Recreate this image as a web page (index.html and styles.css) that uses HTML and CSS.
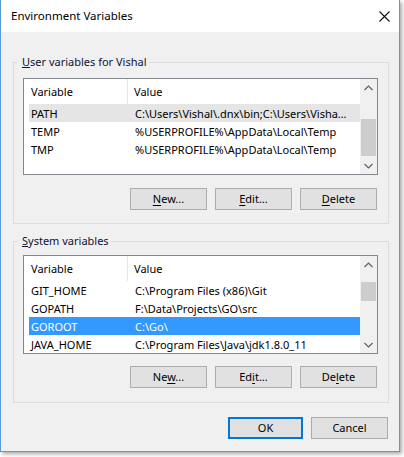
FILE: index.html
```html
<!DOCTYPE html>
<html>
<head>
<meta charset="utf-8">
<link rel="stylesheet" href="styles.css">
</head>
<body>
<div class="window">
  <div class="titlebar">
    <span class="title">Environment Variables</span>
    <svg class="close" width="11" height="11" viewBox="0 0 11 11"><path d="M0.5 0.5 L10.5 10.5 M10.5 0.5 L0.5 10.5" stroke="#111" stroke-width="1.1" fill="none"/></svg>
  </div>
  <div class="body">
    <fieldset class="group group-user">
      <legend><u>U</u>ser variables for Vishal</legend>
      <div class="listview lv-user">
        <div class="lv-main">
          <div class="lv-header"><div class="c1">Variable</div><div class="c2">Value</div></div>
          <div class="row hot"><div class="c1">PATH</div><div class="c2">C:\Users\Vishal\.dnx\bin;C:\Users\Visha…</div></div>
          <div class="row"><div class="c1">TEMP</div><div class="c2">%USERPROFILE%\AppData\Local\Temp</div></div>
          <div class="row"><div class="c1">TMP</div><div class="c2">%USERPROFILE%\AppData\Local\Temp</div></div>
        </div>
        <div class="scrollbar">
          <div class="arrow"><svg width="9" height="6" viewBox="0 0 9 6"><path d="M0.5 5 L4.5 1 L8.5 5" stroke="#606060" stroke-width="1.2" fill="none"/></svg></div>
          <div class="track"><div class="thumb" style="margin-top:23px;height:37px"></div></div>
          <div class="arrow"><svg width="9" height="6" viewBox="0 0 9 6"><path d="M0.5 1 L4.5 5 L8.5 1" stroke="#606060" stroke-width="1.2" fill="none"/></svg></div>
        </div>
      </div>
      <div class="btnrow">
        <button class="btn"><u>N</u>ew...</button>
        <button class="btn"><u>E</u>dit...</button>
        <button class="btn"><u>D</u>elete</button>
      </div>
    </fieldset>
    <fieldset class="group group-sys">
      <legend><u>S</u>ystem variables</legend>
      <div class="listview lv-sys">
        <div class="lv-main">
          <div class="lv-header"><div class="c1">Variable</div><div class="c2">Value</div></div>
          <div class="row"><div class="c1">GIT_HOME</div><div class="c2">C:\Program Files (x86)\Git</div></div>
          <div class="row"><div class="c1">GOPATH</div><div class="c2">F:\Data\Projects\GO\src</div></div>
          <div class="row selected"><div class="c1">GOROOT</div><div class="c2">C:\Go\</div></div>
          <div class="row"><div class="c1">JAVA_HOME</div><div class="c2">C:\Program Files\Java\jdk1.8.0_11</div></div>
        </div>
        <div class="scrollbar">
          <div class="arrow"><svg width="9" height="6" viewBox="0 0 9 6"><path d="M0.5 5 L4.5 1 L8.5 5" stroke="#606060" stroke-width="1.2" fill="none"/></svg></div>
          <div class="track"><div class="thumb" style="margin-top:9px;height:19px"></div></div>
          <div class="arrow"><svg width="9" height="6" viewBox="0 0 9 6"><path d="M0.5 1 L4.5 5 L8.5 1" stroke="#606060" stroke-width="1.2" fill="none"/></svg></div>
        </div>
      </div>
      <div class="btnrow btnrow-sys">
        <button class="btn">Ne<u>w</u>...</button>
        <button class="btn">Ed<u>i</u>t...</button>
        <button class="btn">De<u>l</u>ete</button>
      </div>
    </fieldset>
    <div class="dialog-buttons">
      <button class="btn btn-default">OK</button>
      <button class="btn btn-cancel">Cancel</button>
    </div>
  </div>
</div>
</body>
</html>
```
FILE: styles.css
```css
* { box-sizing: border-box; }
html, body { margin: 0; padding: 0; background: #ffffff; }
body {
  font-family: "Noto Sans", "Open Sans", sans-serif;
  font-size: 11px;
  color: #000;
  width: 404px;
  height: 457px;
  overflow: hidden;
}
.window {
  width: 400px;
  height: 452px;
  background: #f0f0f0;
  border: 1px solid #5b9bd5;
  border-top: none;
  box-shadow: 2px 2px 4px rgba(0,0,0,0.35);
  display: flex;
  flex-direction: column;
}
.titlebar {
  height: 32px;
  background: #fff;
  display: flex;
  align-items: center;
  justify-content: space-between;
  padding: 0 9px 0 10px;
  flex: none;
}
.title { font-size: 11.5px; color: #000; padding-bottom: 1px; }
.body {
  flex: 1;
  display: flex;
  flex-direction: column;
  padding: 22px 10px 0 12px;
}
.group {
  margin: 0;
  width: 376px;
  border: 1px solid #dcdcdc;
  padding: 8px 10px 13px 9px;
  min-width: 0;
}
.group legend {
  padding: 0 2px 0 5px;
  margin-left: -6px;
  line-height: 16px;
  height: 16px;
  color: #101030;
}
.group-sys {
  margin-top: 9px;
  padding-top: 6px;
  padding-bottom: 14px;
}
.listview {
  display: flex;
  border: 1px solid #828790;
  background: #fff;
  width: 355px;
}
.lv-user { height: 97px; }
.lv-sys { height: 99px; }
.lv-main {
  flex: 1;
  display: flex;
  flex-direction: column;
  min-width: 0;
}
.lv-header {
  height: 25px;
  display: flex;
  align-items: center;
  flex: none;
}
.lv-header .c1 {
  width: 104px;
  padding-left: 7px;
  height: 100%;
  display: flex;
  align-items: center;
  border-right: 1px solid #e5e5e5;
}
.lv-header .c2 { padding-left: 6px; }
.row {
  height: 18px;
  display: flex;
  align-items: center;
  margin-left: 5px;
  flex: none;
  white-space: nowrap;
}
.row .c1 { width: 99px; padding-left: 2px; }
.row .c2 { padding-left: 7px; overflow: hidden; }
.row.hot { background: #e5e5e5; }
.row.selected { background: #3399ff; color: #fff; }
.scrollbar {
  width: 17px;
  flex: none;
  background: #f0f0f0;
  display: flex;
  flex-direction: column;
}
.arrow {
  height: 17px;
  display: flex;
  align-items: center;
  justify-content: center;
  flex: none;
}
.track { flex: 1; display: flex; flex-direction: column; }
.thumb { background: #cdcdcd; margin-left: 1px; margin-right: 1px; }
.btnrow {
  display: flex;
  justify-content: flex-end;
  gap: 8px;
  margin-top: 13px;
  padding-right: 1px;
}
.btnrow-sys { margin-top: 12px; }
.btn {
  width: 77px;
  height: 22px;
  background: #e1e1e1;
  border: 1px solid #adadad;
  font-family: "Noto Sans", "Open Sans", sans-serif;
  font-size: 11px;
  color: #000;
  padding: 0 0 1px 0;
  margin: 0;
  border-radius: 0;
}
.btn u { text-underline-offset: 2px; }
.dialog-buttons {
  display: flex;
  justify-content: flex-end;
  gap: 8px;
  margin-top: 14px;
  width: 375px;
}
.dialog-buttons .btn-default { width: 75px; }
.dialog-buttons .btn-cancel { width: 77px; }
.btn-default {
  border: 1px solid #0078d7;
  box-shadow: inset 0 0 0 1px #0078d7;
}
```
